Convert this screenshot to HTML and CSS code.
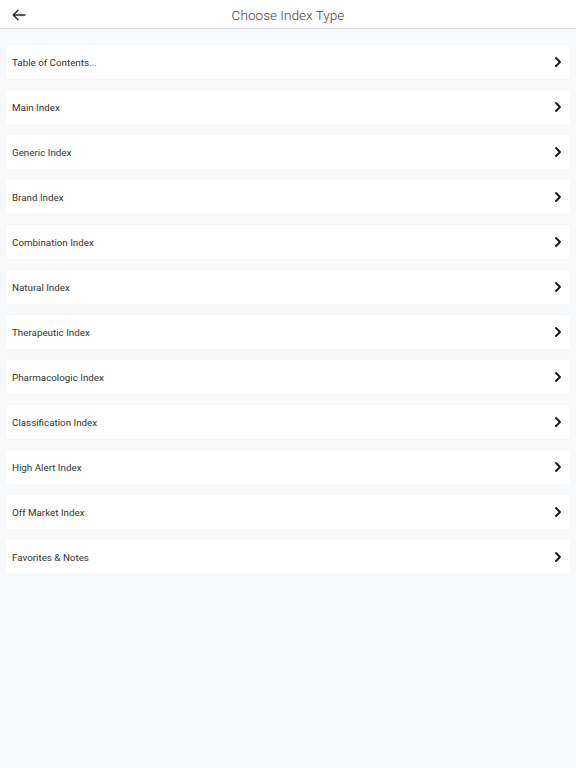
FILE: index.html
```html
<!DOCTYPE html>
<html lang="en">

<head>
  <meta charset="UTF-8">
  <meta name="viewport" content="width=device-width, initial-scale=1.0">
  <title>Choose Index Type</title>
  <link rel="stylesheet" href="styles.css">
</head>

<body>

  <!-- top bar -->
  <div class="top-bar">
    <button class="back-button" aria-label="Back">
      <svg width="14" height="12" viewBox="0 0 14 12" fill="none" stroke="#222" stroke-width="1.3" stroke-linecap="round" stroke-linejoin="round">
        <path d="M13 6H1.5M6 1.2L1.2 6L6 10.8" />
      </svg>
    </button>
    <h1 class="title">Choose Index Type</h1>
  </div>

  <!-- index list -->
  <ul class="index-list">
    <li class="index-item"><span>Table of Contents...</span><span class="chevron"></span></li>
    <li class="index-item"><span>Main Index</span><span class="chevron"></span></li>
    <li class="index-item"><span>Generic Index</span><span class="chevron"></span></li>
    <li class="index-item"><span>Brand Index</span><span class="chevron"></span></li>
    <li class="index-item"><span>Combination Index</span><span class="chevron"></span></li>
    <li class="index-item"><span>Natural Index</span><span class="chevron"></span></li>
    <li class="index-item"><span>Therapeutic Index</span><span class="chevron"></span></li>
    <li class="index-item"><span>Pharmacologic Index</span><span class="chevron"></span></li>
    <li class="index-item"><span>Classification Index</span><span class="chevron"></span></li>
    <li class="index-item"><span>High Alert Index</span><span class="chevron"></span></li>
    <li class="index-item"><span>Off Market Index</span><span class="chevron"></span></li>
    <li class="index-item"><span>Favorites &amp; Notes</span><span class="chevron"></span></li>
  </ul>

  <script>
    // fill chevrons with the same svg
    var chevrons = document.querySelectorAll(".chevron");
    for (var i = 0; i < chevrons.length; i++) {
      chevrons[i].innerHTML =
        '<svg width="6" height="10" viewBox="0 0 6 10" fill="none" stroke="#111" stroke-width="1.8" stroke-linecap="round" stroke-linejoin="round">' +
        '<path d="M1 1L5 5L1 9" /></svg>';
    }
  </script>

</body>

</html>
```

FILE: styles.css
```css
* {
  margin: 0;
  padding: 0;
  box-sizing: border-box;
}

body {
  font-family: Roboto, "Liberation Sans", Arial, sans-serif;
  background-color: #f8f9fb;
  min-height: 100vh;
}

.top-bar {
  position: relative;
  height: 29px;
  padding-top: 2px;
  background-color: #ffffff;
  border-bottom: 1px solid #dcdde0;
  display: flex;
  align-items: center;
  justify-content: center;
}

.back-button {
  position: absolute;
  left: 11px;
  top: 8px;
  background: none;
  border: none;
  width: 16px;
  height: 14px;
  display: flex;
  align-items: center;
  justify-content: center;
  cursor: pointer;
}

.title {
  font-size: 13.6px;
  font-weight: 300;
  color: #444;
}

.index-list {
  list-style: none;
  padding: 16px 6px;
  display: flex;
  flex-direction: column;
  gap: 11px;
}

.index-item {
  height: 34px;
  background-color: #ffffff;
  border-radius: 3px;
  box-shadow: 0px 0px 2px rgba(0, 0, 0, 0.04);
  display: flex;
  align-items: center;
  justify-content: space-between;
  padding: 0 9px 0 6px;
  font-size: 9.8px;
  color: #333;
  cursor: pointer;
}

.chevron {
  display: flex;
  align-items: center;
}
```
